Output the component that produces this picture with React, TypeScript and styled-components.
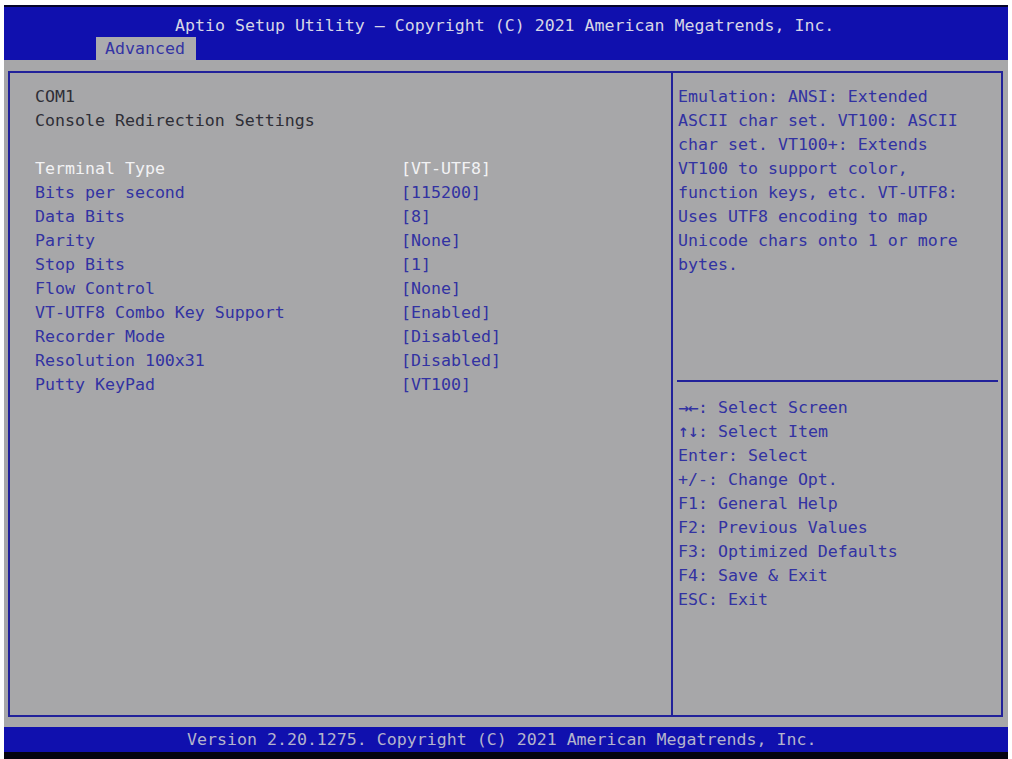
import React from 'react';
import styled, { createGlobalStyle } from 'styled-components';

const GlobalStyle = createGlobalStyle`
  html, body {
    margin: 0;
    padding: 0;
    background: #ffffff;
  }
  body {
    font-family: "DejaVu Sans Mono", "Liberation Mono", monospace;
  }
`;

const Screen = styled.div`
  width: 1004px;
  height: 754px;
  margin: 5px 0 0 4px;
  display: flex;
  flex-direction: column;
  background: #a7a7a9;
  font-family: "DejaVu Sans Mono", "Liberation Mono", monospace;
  font-size: 16.6px;
  line-height: 24px;
`;

const Header = styled.header`
  height: 53px;
  border-top: 2px solid #05052a;
  background: #1010ae;
  display: flex;
  flex-direction: column;
`;

const Title = styled.div`
  height: 30px;
  box-sizing: border-box;
  padding: 7px 0 0 171px;
  display: flex;
  align-items: center;
  color: #d6d6e6;
  white-space: pre;
`;

const Tabs = styled.nav`
  flex: 1;
  display: flex;
  align-items: flex-end;
  padding-left: 92px;
`;

const Tab = styled.div<{ $active?: boolean }>`
  width: 100px;
  height: 23px;
  box-sizing: border-box;
  padding: 1px 0 0 9px;
  display: flex;
  align-items: center;
  background: ${(p) => (p.$active ? '#ababae' : 'transparent')};
  color: ${(p) => (p.$active ? '#3434a4' : '#d6d6e6')};
`;

const Body = styled.main`
  flex: 1;
  padding: 11px 5px 10px 4px;
  display: flex;
`;

const Frame = styled.div`
  flex: 1;
  display: flex;
  border: 2px solid #22229a;
`;

const LeftPane = styled.section`
  width: 663px;
  padding: 12px 0 0 25px;
  box-sizing: border-box;
  border-right: 2px solid #22229a;
`;

const RightPane = styled.aside`
  flex: 1;
  display: flex;
  flex-direction: column;
`;

const Line = styled.div<{ $tone?: 'dim' | 'blue' | 'white' }>`
  height: 24px;
  white-space: pre;
  color: ${(p) =>
    p.$tone === 'white' ? '#f2f2f4' : p.$tone === 'dim' ? '#2e2e36' : '#3232a2'};
`;

const Spacer = styled.div`
  height: 24px;
`;

const Row = styled.div<{ $selected?: boolean }>`
  display: grid;
  grid-template-columns: 366px 1fr;
  height: 24px;
  white-space: pre;
  color: ${(p) => (p.$selected ? '#f2f2f4' : '#3232a2')};
`;

const HelpBlock = styled.div`
  height: 307px;
  padding: 12px 0 0 5px;
  box-sizing: border-box;
`;

const Rule = styled.hr`
  margin: 0 3px 0 4px;
  border: none;
  height: 2px;
  background: #22229a;
`;

const KeyBlock = styled.div`
  padding: 14px 0 0 5px;
`;

const Arrows = styled.span`
  display: inline-block;
  width: 20px;
  font-family: "DejaVu Sans", sans-serif;
  font-size: 13px;
  font-weight: bold;
  letter-spacing: -1px;
`;

const Footer = styled.footer`
  height: 25px;
  background: #1010ae;
  color: #b4b4cc;
  display: flex;
  align-items: center;
  padding-left: 183px;
  white-space: pre;
  border-bottom: 7px solid #040410;
`;

const items: { label: string; value: string }[] = [
  { label: 'Terminal Type', value: '[VT-UTF8]' },
  { label: 'Bits per second', value: '[115200]' },
  { label: 'Data Bits', value: '[8]' },
  { label: 'Parity', value: '[None]' },
  { label: 'Stop Bits', value: '[1]' },
  { label: 'Flow Control', value: '[None]' },
  { label: 'VT-UTF8 Combo Key Support', value: '[Enabled]' },
  { label: 'Recorder Mode', value: '[Disabled]' },
  { label: 'Resolution 100x31', value: '[Disabled]' },
  { label: 'Putty KeyPad', value: '[VT100]' },
];

const help = [
  'Emulation: ANSI: Extended',
  'ASCII char set. VT100: ASCII',
  'char set. VT100+: Extends',
  'VT100 to support color,',
  'function keys, etc. VT-UTF8:',
  'Uses UTF8 encoding to map',
  'Unicode chars onto 1 or more',
  'bytes.',
];

const keys = [
  'Enter: Select',
  '+/-: Change Opt.',
  'F1: General Help',
  'F2: Previous Values',
  'F3: Optimized Defaults',
  'F4: Save & Exit',
  'ESC: Exit',
];

export default function App() {
  return (
    <>
      <GlobalStyle />
      <Screen>
        <Header>
          <Title>Aptio Setup Utility – Copyright (C) 2021 American Megatrends, Inc.</Title>
          <Tabs>
            <Tab $active>Advanced</Tab>
          </Tabs>
        </Header>
        <Body>
          <Frame>
            <LeftPane>
              <Line $tone="dim">COM1</Line>
              <Line $tone="dim">Console Redirection Settings</Line>
              <Spacer />
              {items.map((it, i) => (
                <Row key={it.label} $selected={i === 0}>
                  <span>{it.label}</span>
                  <span>{it.value}</span>
                </Row>
              ))}
            </LeftPane>
            <RightPane>
              <HelpBlock>
                {help.map((t) => (
                  <Line key={t}>{t}</Line>
                ))}
              </HelpBlock>
              <Rule />
              <KeyBlock>
                <Line>
                  <Arrows>→←</Arrows>: Select Screen
                </Line>
                <Line>
                  <Arrows>↑↓</Arrows>: Select Item
                </Line>
                {keys.map((t) => (
                  <Line key={t}>{t}</Line>
                ))}
              </KeyBlock>
            </RightPane>
          </Frame>
        </Body>
        <Footer>Version 2.20.1275. Copyright (C) 2021 American Megatrends, Inc.</Footer>
      </Screen>
    </>
  );
}
